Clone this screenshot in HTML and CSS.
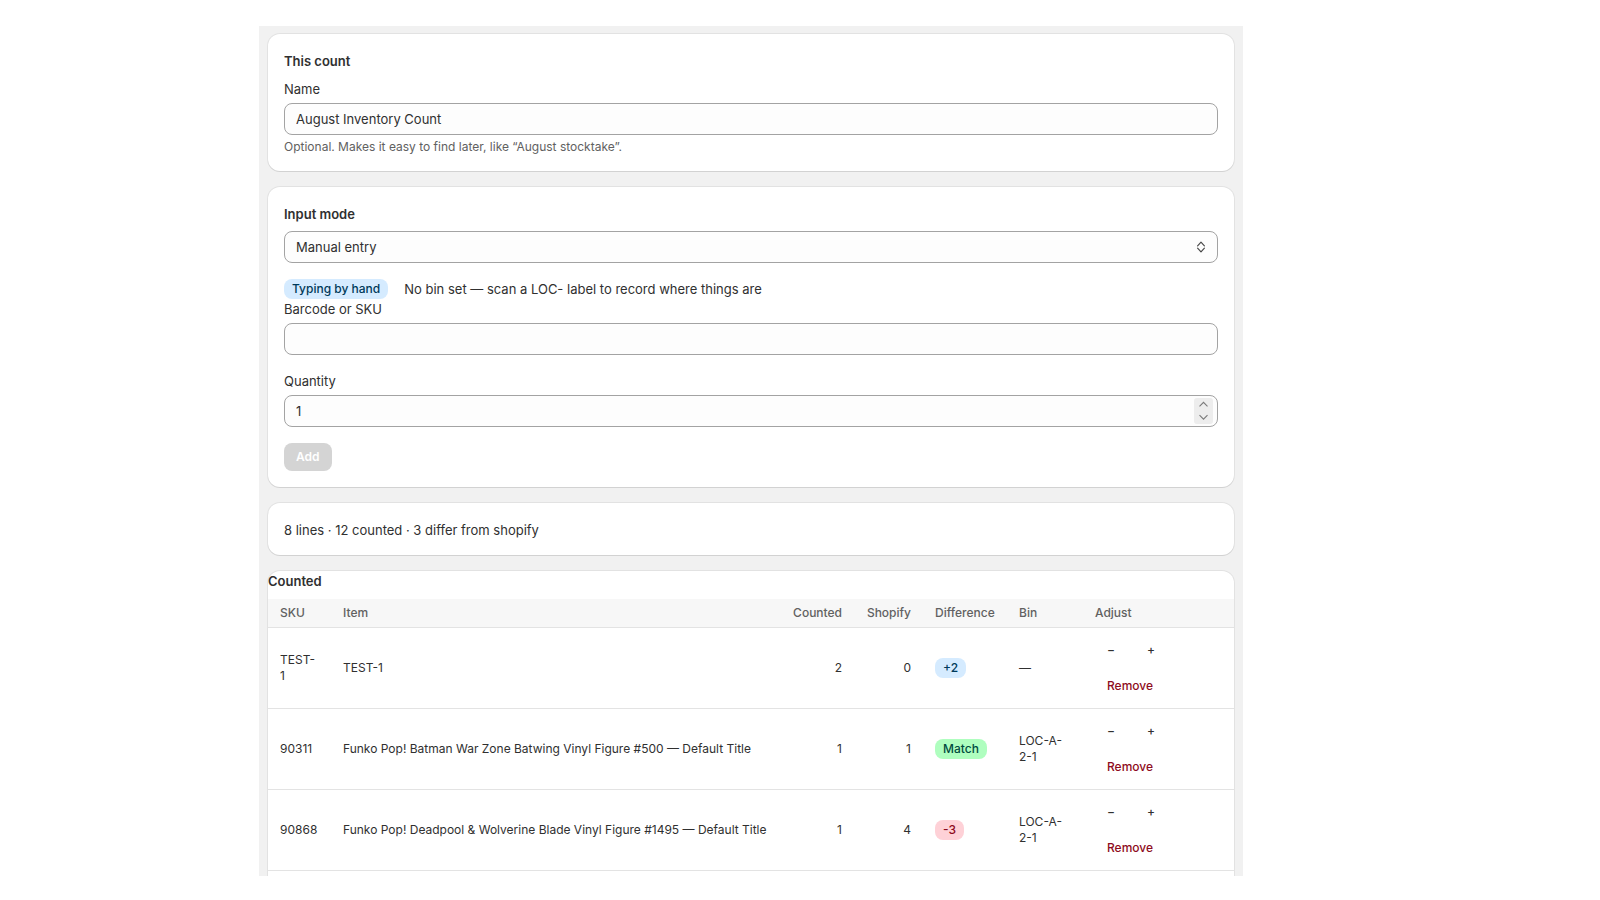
FILE: index.html
```html
<!DOCTYPE html>
<html lang="en">
<head>
<meta charset="utf-8">
<title>Inventory count</title>
<link rel="stylesheet" href="styles.css">
</head>
<body>
<div class="page">
  <div class="frame">
    <section class="card">
      <h2 class="card-title">This count</h2>
      <label class="label" for="count-name">Name</label>
      <div class="field"><input id="count-name" class="input" type="text" value="August Inventory Count"></div>
      <p class="help">Optional. Makes it easy to find later, like “August stocktake”.</p>
    </section>

    <section class="card">
      <label class="label label-strong">Input mode</label>
      <div class="field select-field">
        <span class="select-value">Manual entry</span>
        <svg class="select-icon" width="16" height="16" viewBox="0 0 16 16" aria-hidden="true"><path d="M4.6 6.8 8 3.2 11.4 6.8" fill="none" stroke="#4a4a4a" stroke-width="1.2" stroke-linecap="round" stroke-linejoin="round"/><path d="M4.6 9.2 8 12.8 11.4 9.2" fill="none" stroke="#4a4a4a" stroke-width="1.2" stroke-linecap="round" stroke-linejoin="round"/></svg>
      </div>
      <div class="status-row">
        <span class="badge badge-info">Typing by hand</span>
        <span>No bin set — scan a LOC- label to record where things are</span>
      </div>
      <label class="label" for="barcode">Barcode or SKU</label>
      <div class="field field-gap"><input id="barcode" class="input" type="text" value=""></div>
      <label class="label" for="qty">Quantity</label>
      <div class="field field-gap">
        <input id="qty" class="input" type="number" value="1">
        <span class="spinner"><svg width="19" height="26" viewBox="0 0 19 26" aria-hidden="true"><path d="M5.5 8.3 9.5 4.3 13.5 8.3" fill="none" stroke="#7a7a7a" stroke-width="1.1"/><path d="M5.5 17.2 9.5 21.2 13.5 17.2" fill="none" stroke="#7a7a7a" stroke-width="1.1"/></svg></span>
      </div>
      <button class="btn-primary" type="button" disabled>Add</button>
    </section>

    <section class="card card-summary">8 lines · 12 counted · 3 differ from shopify</section>

    <section class="card card-table">
      <h2 class="table-title">Counted</h2>
      <table class="count-table">
        <colgroup>
          <col class="c-sku"><col class="c-item"><col class="c-counted"><col class="c-shopify"><col class="c-diff"><col class="c-bin"><col class="c-adjust">
        </colgroup>
        <thead>
          <tr><th>SKU</th><th>Item</th><th class="num">Counted</th><th class="num">Shopify</th><th>Difference</th><th>Bin</th><th>Adjust</th></tr>
        </thead>
        <tbody>
          <tr>
            <td class="sku">TEST-1</td><td>TEST-1</td><td class="num">2</td><td class="num">0</td>
            <td><span class="badge badge-info">+2</span></td><td class="bin">—</td>
            <td><div class="adjust"><button class="btn-plain" type="button">−</button><button class="btn-plain" type="button">+</button><button class="btn-plain btn-critical" type="button">Remove</button></div></td>
          </tr>
          <tr>
            <td class="sku">90311</td><td>Funko Pop! Batman War Zone Batwing Vinyl Figure #500 — Default Title</td><td class="num">1</td><td class="num">1</td>
            <td><span class="badge badge-success">Match</span></td><td class="bin">LOC-A-2-1</td>
            <td><div class="adjust"><button class="btn-plain" type="button">−</button><button class="btn-plain" type="button">+</button><button class="btn-plain btn-critical" type="button">Remove</button></div></td>
          </tr>
          <tr>
            <td class="sku">90868</td><td>Funko Pop! Deadpool &amp; Wolverine Blade Vinyl Figure #1495 — Default Title</td><td class="num">1</td><td class="num">4</td>
            <td><span class="badge badge-critical">-3</span></td><td class="bin">LOC-A-2-1</td>
            <td><div class="adjust"><button class="btn-plain" type="button">−</button><button class="btn-plain" type="button">+</button><button class="btn-plain btn-critical" type="button">Remove</button></div></td>
          </tr>
        </tbody>
      </table>
    </section>
  </div>
</div>
</body>
</html>
```

FILE: styles.css
```css
* { box-sizing: border-box; }

html, body {
  margin: 0;
  background: #ffffff;
}

body {
  font-family: Inter, "Noto Sans", "Liberation Sans", sans-serif;
  font-size: 13px;
  line-height: 20px;
  color: #303030;
}

.page {
  padding: 26px 0 0 259px;
}

.frame {
  width: 984px;
  height: 850px;
  overflow: hidden;
  background: #f1f1f1;
  padding: 8px 9px 0;
  display: flex;
  flex-direction: column;
  gap: 16px;
}

.card {
  flex: none;
  background: #ffffff;
  border-radius: 12px;
  padding: 17px 16px 16px;
  box-shadow: 0 0 0 1px rgba(0, 0, 0, 0.06), 0 1px 0 0 rgba(26, 26, 26, 0.08);
}

.card-title {
  margin: 0 0 8px;
  font-size: 13px;
  line-height: 20px;
  font-weight: 600;
}

.label {
  display: block;
  margin-bottom: 4px;
  line-height: 20px;
}

.label-strong {
  font-weight: 600;
  margin-bottom: 7px;
}

.field {
  display: flex;
  align-items: center;
  height: 32px;
  border: 1px solid #a3a3a3;
  border-radius: 8px;
  background: #fdfdfd;
}

.field-gap {
  margin-bottom: 16px;
}

.input {
  flex: 1;
  min-width: 0;
  height: 100%;
  border: 0;
  outline: none;
  background: transparent;
  padding: 0 11px;
  font: inherit;
  color: inherit;
}

.input::-webkit-inner-spin-button,
.input::-webkit-outer-spin-button {
  -webkit-appearance: none;
  margin: 0;
}

.select-field {
  margin-bottom: 16px;
}

.select-value {
  flex: 1;
  padding-left: 11px;
}

.select-icon {
  margin-right: 8px;
}

.spinner {
  display: flex;
  width: 19px;
  height: 26px;
  margin-right: 4px;
  border-radius: 3px;
  background: #ededed;
}

.help {
  margin: 4px 0 0;
  font-size: 12px;
  line-height: 16px;
  color: #616161;
}

.status-row {
  display: flex;
  align-items: center;
  gap: 16px;
  height: 20px;
}

.badge {
  display: inline-flex;
  align-items: center;
  height: 20px;
  padding: 0 8px;
  border-radius: 8px;
  font-size: 12px;
  line-height: 16px;
  font-weight: 550;
}

.badge-info {
  background: #d5ebff;
  color: #003a5a;
}

.badge-success {
  background: #affebf;
  color: #014b40;
}

.badge-critical {
  background: #fed1d7;
  color: #8e0b21;
}

.btn-primary {
  display: block;
  height: 28px;
  padding: 0 12px;
  border: 0;
  border-radius: 8px;
  background: #d4d4d4;
  color: #ffffff;
  font-family: inherit;
  font-size: 12px;
  font-weight: 600;
  line-height: 16px;
}

.card-summary {
  padding: 17px 16px 15px;
}

.card-table {
  flex: 1 0 auto;
  padding: 0;
  border-bottom-left-radius: 0;
  border-bottom-right-radius: 0;
}

.table-title {
  margin: 0 0 8px;
  font-size: 13px;
  line-height: 20px;
  font-weight: 600;
}

.count-table {
  width: 100%;
  table-layout: fixed;
  border-collapse: collapse;
}

.c-sku { width: 63px; }
.c-item { width: 450px; }
.c-counted { width: 73px; }
.c-shopify { width: 69px; }
.c-diff { width: 84px; }
.c-bin { width: 76px; }
.c-adjust { width: 151px; }

.count-table th {
  padding: 4px 12px;
  background: #f7f7f7;
  border-bottom: 1px solid #e3e3e3;
  text-align: left;
  font-size: 12px;
  line-height: 20px;
  font-weight: 550;
  color: #616161;
  white-space: nowrap;
}

.count-table td {
  padding: 8px 12px;
  border-bottom: 1px solid #e3e3e3;
  vertical-align: middle;
  font-size: 12px;
  line-height: 16px;
}

.count-table td.sku {
  padding-right: 14px;
}

.count-table td.bin {
  padding-right: 18px;
}

.count-table .num {
  text-align: right;
}

.adjust {
  display: flex;
  flex-wrap: wrap;
  gap: 8px;
}

.btn-plain {
  height: 28px;
  padding: 0 12px;
  border: 0;
  background: transparent;
  color: #303030;
  font-family: inherit;
  font-size: 12px;
  font-weight: 550;
  line-height: 16px;
}

.btn-critical {
  color: #8e0b21;
}
```
